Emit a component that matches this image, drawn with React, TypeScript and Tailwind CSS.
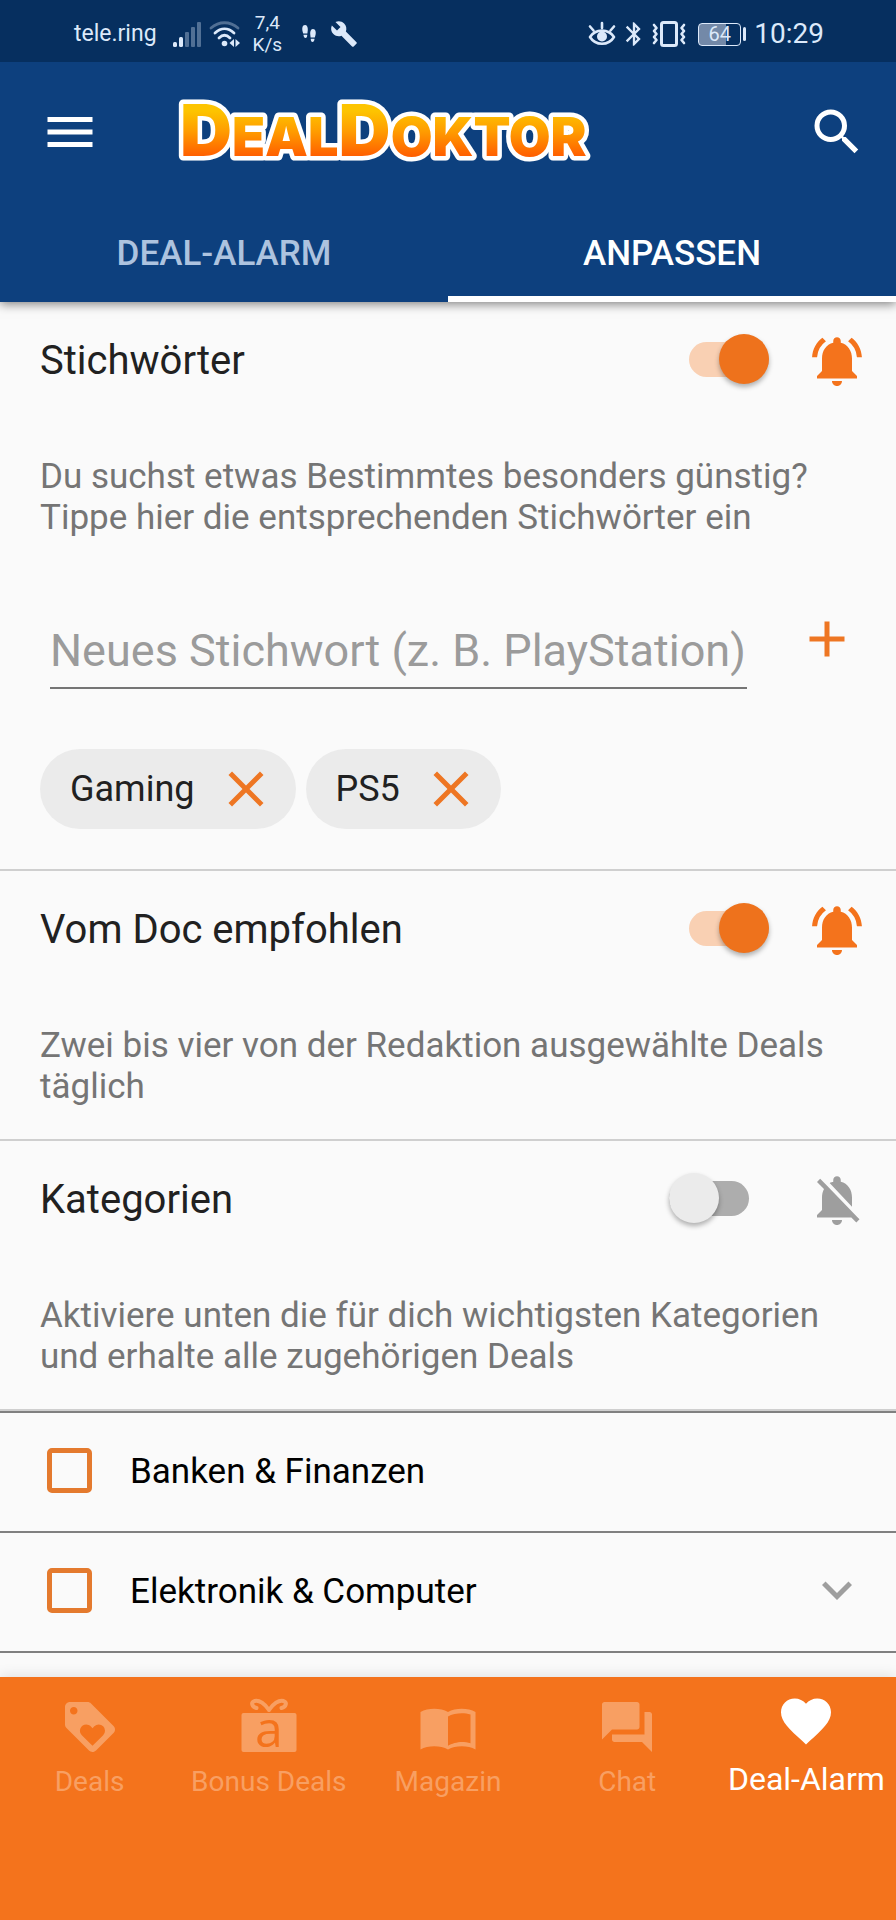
import { useId, useState } from "react";
import type { FormEvent, ReactNode } from "react";
import {
  MdAdd,
  MdBluetooth,
  MdBuild,
  MdClose,
  MdFavorite,
  MdForum,
  MdKeyboardArrowDown,
  MdLoyalty,
  MdMenu,
  MdNotificationsActive,
  MdNotificationsOff,
  MdSearch,
} from "react-icons/md";

function SignalIcon() {
  return (
    <svg viewBox="0 0 28 26" className="h-[26px] w-7" fill="currentColor">
      <rect x="0" y="21" width="4" height="5" rx="1.5" />
      <rect x="6" y="16" width="4" height="10" rx="1.5" />
      <g opacity="0.35">
        <rect x="12" y="11" width="4" height="15" rx="1" />
        <rect x="18" y="6" width="4" height="20" rx="1" />
        <rect x="24" y="1" width="4" height="25" rx="1" />
      </g>
    </svg>
  );
}

function WifiIcon() {
  return (
    <svg viewBox="0 0 32 26" className="h-[26px] w-8" fill="none" stroke="currentColor" strokeWidth="2.8" strokeLinecap="round">
      <path d="M2 7C10 0 21 0 29 7" opacity="0.35" />
      <path d="M6 12C12 6.500 19 6.500 25 12" />
      <path d="M10 17C13.500 13.500 17.500 13.500 21 17" />
      <circle cx="15.500" cy="22.500" r="2.800" fill="currentColor" stroke="none" />
      <path d="M25 18v8l-4.500-4zM26.500 18v8l4.500-4z" fill="currentColor" stroke="none" />
    </svg>
  );
}

function StepsIcon() {
  return (
    <svg viewBox="0 0 14 20" className="h-5 w-3.5" fill="currentColor">
      <path d="M3 1C5 1 6 3 5.800 6L5.400 9.500H1.200C.4 7 0 5 .4 3.400.8 1.800 1.800 1 3 1zM1.500 10.800h3.700c.2 2-.5 3.200-1.700 3.200s-2-1.200-2-3.200z" />
      <path d="M11 5c1.200 0 2.200.8 2.600 2.400.4 1.600 0 3.600-.8 6.100H8.600L8.200 10C8 7 9 5 11 5zM8.800 14.800h3.700c0 2-.8 3.200-2 3.200s-1.900-1.200-1.700-3.200z" />
    </svg>
  );
}

function EyeIcon() {
  return (
    <svg viewBox="0 0 28 26" className="h-[26px] w-7" fill="none" stroke="currentColor" strokeWidth="2.600" strokeLinecap="round">
      <path d="M2 16C7.500 7.500 20.500 7.500 26 16 20.500 25 7.500 25 2 16z" strokeLinejoin="round" />
      <circle cx="14" cy="15.500" r="5" fill="currentColor" stroke="none" />
      <path d="M14 2v5M2 5.500l3.500 4M26 5.500l-3.500 4" />
    </svg>
  );
}

function VibrateIcon() {
  return (
    <svg viewBox="0 0 34 28" className="h-7 w-[34px]" fill="none" stroke="currentColor" strokeWidth="3" strokeLinecap="round" strokeLinejoin="round">
      <rect x="9.500" y="2.500" width="15" height="23" rx="2" />
      <path d="M2 5l2.500 3L2 11l2.500 3L2 17l2.500 3L2 23M32 5l-2.500 3L32 11l-2.500 3 2.500 3-2.500 3 2.500 3" strokeWidth="2.600" />
    </svg>
  );
}

function GiftIcon() {
  return (
    <svg viewBox="0 -10 60 80" className="-my-[10px] h-20 w-[60px]">
      <path
        d="M30 13C26 7 20 2.500 15.500 4 11.500 5.500 13 10 17.500 11M30 13C34 7 40 2.500 44.500 4 48.500 5.500 47 10 42.500 11"
        fill="none"
        stroke="currentColor"
        strokeWidth="4"
        strokeLinecap="round"
        strokeLinejoin="round"
      />
      <rect x="2.500" y="16" width="55" height="39" rx="2" fill="currentColor" />
      <text x="30" y="50" textAnchor="middle" className="fill-[#f4731c] font-['Open_Sans',sans-serif] text-[50px]">
        a
      </text>
    </svg>
  );
}

function MagazineIcon() {
  return (
    <svg viewBox="0 -0.500 24 24" className="size-[60px]" fill="currentColor">
      <path d="M12 5.500C10.500 4.600 8.500 4.200 6.500 4.200S2.500 4.600 1 5.500v15c1.500-.9 3.500-1.300 5.500-1.300s4 .4 5.500 1.300c1.500-.9 3.500-1.300 5.500-1.300s4 .4 5.500 1.300v-15c-1.500-.9-3.500-1.300-5.500-1.300S13.500 4.600 12 5.500zM21 18c-1.100-.3-2.300-.5-3.500-.5-1.700 0-4.150.65-5.500 1.500V7.300c1.350-.85 3.800-1.300 5.500-1.300 1.200 0 2.400.15 3.500.5z" />
    </svg>
  );
}

function Logo() {
  return (
    <svg viewBox="0 -18 440 100" className="h-[100px] w-[440px]" role="img" aria-label="DealDoktor">
      <defs>
        <linearGradient id="logo-fill" gradientUnits="userSpaceOnUse" x1="0" y1="6" x2="0" y2="56">
          <stop offset="0.100" stopColor="#fdc400" />
          <stop offset="0.500" stopColor="#ff9d00" />
          <stop offset="1" stopColor="#ff5f00" />
        </linearGradient>
      </defs>
      <text
        x="5"
        y="56"
        fill="url(#logo-fill)"
        stroke="#fff"
        strokeWidth="9"
        strokeLinejoin="round"
        paintOrder="stroke"
        className="font-['Inter',sans-serif] text-[72px] font-black"
      >
        D<tspan className="text-[54px]">EAL</tspan>D<tspan className="text-[54px]">OKTOR</tspan>
      </text>
    </svg>
  );
}

function StatusBar() {
  return (
    <div className="flex h-[62px] items-center justify-between bg-[#062f5f] pt-1.5 pr-[72px] pl-[74px] text-[#dce9fa]">
      <div className="flex items-center">
        <span className="text-[23px]">tele.ring</span>
        <span className="ml-4 flex gap-2">
          <SignalIcon />
          <WifiIcon />
        </span>
        <span className="ml-3 text-center text-[19px] leading-[22px]">
          7,4
          <br />
          K/s
        </span>
        <span className="ml-5 flex items-center gap-3.5">
          <StepsIcon />
          <MdBuild className="size-7" />
        </span>
      </div>
      <div className="flex items-center">
        <EyeIcon />
        <MdBluetooth className="mx-1 size-7" />
        <VibrateIcon />
        <span className="ml-3 flex items-center gap-0.5">
          <span className="flex h-[23px] w-[43px] items-center justify-center rounded border border-current bg-linear-to-r from-[#7389a8] from-65% to-transparent to-65% text-[20px] leading-none">
            64
          </span>
          <span className="h-3.5 w-[3px] rounded-sm bg-current" />
        </span>
        <span className="ml-2 text-[28px]">10:29</span>
      </div>
    </div>
  );
}

function Switch({ checked, onChange, label }: { checked: boolean; onChange: (on: boolean) => void; label: string }) {
  return (
    <label className={`flex w-[100px] cursor-pointer pb-1 ${checked ? "justify-end" : "justify-start"}`}>
      <input
        type="checkbox"
        role="switch"
        aria-label={label}
        checked={checked}
        onChange={(e) => onChange(e.target.checked)}
        className="sr-only"
      />
      <span
        className={`flex h-[35px] w-20 items-center rounded-full ${
          checked ? "justify-end bg-[#f9d0b3]" : "justify-start bg-[#adadad]"
        }`}
      >
        <span
          className={`size-[50px] shrink-0 rounded-full shadow-[0_3px_5px_rgba(0,0,0,0.3)] ${
            checked ? "bg-[#ee721c]" : "bg-[#ebebeb]"
          }`}
        />
      </span>
    </label>
  );
}

interface SectionProps {
  title: string;
  text: string;
  defaultOn?: boolean;
  children?: ReactNode;
}

function Section({ title, text, defaultOn = false, children }: SectionProps) {
  const [on, setOn] = useState(defaultOn);

  return (
    <section className="border-b-2 border-[#cfcfcf]">
      <div className="flex h-[118px] items-center pr-[29px] pl-10">
        <h2 className="flex-1 text-[40px] text-[#212121]">{title}</h2>
        <Switch checked={on} onChange={setOn} label={title} />
        <span className="ml-[38px]">
          {on ? (
            <MdNotificationsActive className="size-[60px] text-[#f4731c]" />
          ) : (
            <MdNotificationsOff className="size-[60px] text-[#9e9e9e]" />
          )}
        </span>
      </div>
      <p className="px-10 pt-9 pb-8 text-[35px] leading-[41px] text-[#757575]">{text}</p>
      {children}
    </section>
  );
}

function Keywords() {
  const [keywords, setKeywords] = useState(["Gaming", "PS5"]);
  const [draft, setDraft] = useState("");

  const handleAdd = (e: FormEvent) => {
    e.preventDefault();
    const word = draft.trim();
    if (!word) return;
    setKeywords([...keywords, word]);
    setDraft("");
  };

  return (
    <>
      <form onSubmit={handleAdd} className="flex items-center pt-[35px] pr-[39px] pl-[50px]">
        <input
          type="text"
          aria-label="Neues Stichwort"
          placeholder="Neues Stichwort (z. B. PlayStation)"
          value={draft}
          onChange={(e) => setDraft(e.target.value)}
          className="h-[84px] min-w-0 flex-1 border-b-2 border-[#757575] bg-transparent pt-2 text-[45px] text-[#212121] outline-none placeholder:text-[#9b9b9b]"
        />
        <button type="submit" aria-label="Hinzufügen" className="mb-4 ml-[50px] text-[#ee7623]">
          <MdAdd className="size-[60px]" />
        </button>
      </form>
      <ul className="flex flex-wrap gap-2.5 px-10 pt-[60px] pb-10">
        {keywords.map((word) => (
          <li key={word} className="flex h-20 items-center gap-[21px] rounded-full bg-[#ebebeb] pr-5 pl-[30px] text-[36px] text-[#212121]">
            {word}
            <button
              type="button"
              aria-label={`${word} entfernen`}
              onClick={() => setKeywords(keywords.filter((k) => k !== word))}
              className="text-[#ee7623]"
            >
              <MdClose className="size-[60px]" />
            </button>
          </li>
        ))}
      </ul>
    </>
  );
}

function CategoryRow({ name, expandable }: { name: string; expandable?: boolean }) {
  const id = useId();
  return (
    <li className="flex h-[120px] items-center border-b-2 border-[#808080] pr-[29px] pl-[47px]">
      <input
        id={id}
        type="checkbox"
        className="mb-1 size-[45px] shrink-0 appearance-none rounded-[5px] border-[5px] border-[#e47a2e] checked:bg-[#e47a2e]"
      />
      <label htmlFor={id} className="flex-1 pl-[38px] text-[35px] text-black">
        {name}
      </label>
      {expandable && (
        <button type="button" aria-label={`${name} aufklappen`} className="mb-1 text-[#9e9e9e]">
          <MdKeyboardArrowDown className="size-[60px]" />
        </button>
      )}
    </li>
  );
}

const navItems = [
  { label: "Deals", icon: <MdLoyalty className="size-[60px]" /> },
  { label: "Bonus Deals", icon: <GiftIcon /> },
  { label: "Magazin", icon: <MagazineIcon /> },
  { label: "Chat", icon: <MdForum className="size-[60px]" /> },
  { label: "Deal-Alarm", icon: <MdFavorite className="size-[60px]" />, active: true },
];

export default function App() {
  return (
    <div className="flex min-h-screen flex-col bg-[#fafafa] font-['Roboto',sans-serif]">
      <header className="z-10 bg-[#0d407e] text-white shadow-[0_2px_10px_rgba(0,0,0,0.5)]">
        <StatusBar />
        <div className="flex h-[140px] items-center pr-[29px] pl-10">
          <button type="button" aria-label="Menü">
            <MdMenu className="size-[60px]" />
          </button>
          <div className="ml-[75px] flex-1">
            <Logo />
          </div>
          <button type="button" aria-label="Suche">
            <MdSearch className="size-[60px]" />
          </button>
        </div>
        <nav className="flex h-[100px] text-[35px] font-medium">
          <a href="#alarm" className="flex flex-1 items-center justify-center pt-1 text-[#adc3df]">
            DEAL-ALARM
          </a>
          <a
            href="#anpassen"
            aria-current="page"
            className="flex flex-1 items-center justify-center pt-1 shadow-[inset_0_-6px_0_white]"
          >
            ANPASSEN
          </a>
        </nav>
      </header>

      <main className="flex-1">
        <Section
          title="Stichwörter"
          text="Du suchst etwas Bestimmtes besonders günstig? Tippe hier die entsprechenden Stichwörter ein"
          defaultOn
        >
          <Keywords />
        </Section>
        <Section
          title="Vom Doc empfohlen"
          text="Zwei bis vier von der Redaktion ausgewählte Deals täglich"
          defaultOn
        />
        <Section
          title="Kategorien"
          text="Aktiviere unten die für dich wichtigsten Kategorien und erhalte alle zugehörigen Deals"
        />
        <ul className="border-t-2 border-[#808080]">
          <CategoryRow name="Banken & Finanzen" />
          <CategoryRow name="Elektronik & Computer" expandable />
        </ul>
      </main>

      <nav className="flex h-[243px] bg-[#f4731c] shadow-[0_-2px_12px_rgba(0,0,0,0.1)]">
        {navItems.map((item) => (
          <a
            key={item.label}
            href="#"
            aria-current={item.active ? "page" : undefined}
            className={`flex flex-1 basis-0 flex-col items-center whitespace-nowrap ${
              item.active ? "pt-3.5 text-[32px] text-white" : "pt-5 text-[28px] text-[#f89f62]"
            }`}
          >
            {item.icon}
            <span className="pt-1">{item.label}</span>
          </a>
        ))}
      </nav>
    </div>
  );
}
